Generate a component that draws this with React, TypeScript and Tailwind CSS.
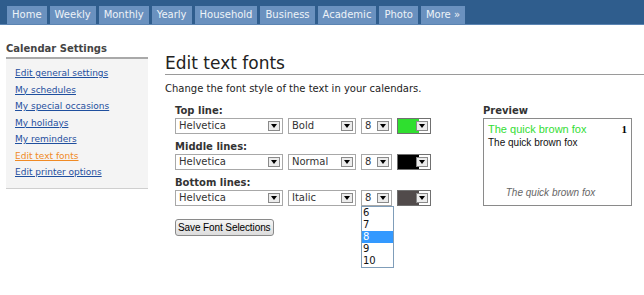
import React from 'react';

const tabs = ['Home', 'Weekly', 'Monthly', 'Yearly', 'Household', 'Business', 'Academic', 'Photo', 'More »'];

const links = [
  'Edit general settings',
  'My schedules',
  'My special occasions',
  'My holidays',
  'My reminders',
  'Edit text fonts',
  'Edit printer options',
];

function Arrow() {
  return (
    <div className="absolute right-[2px] top-[2px] bottom-[2px] w-[12px] bg-[#ececec] border border-[#8a8a8a] flex items-center justify-center">
      <svg width="6" height="4" viewBox="0 0 6 4">
        <path d="M0 0h6L3 4z" fill="#000" />
      </svg>
    </div>
  );
}

function FakeSelect({ value, w }: { value: string; w: string }) {
  return (
    <div className={`relative h-[16px] ${w} bg-white border border-[#a8a8a8] pl-[3px] leading-[14px] text-[#333]`}>
      {value}
      <Arrow />
    </div>
  );
}

function ColorSelect({ color }: { color: string }) {
  return (
    <div className="relative h-[16px] w-[34px] bg-white border border-[#707070]">
      <div className="absolute left-0 top-0 bottom-0 w-[21px]" style={{ background: color }} />
      <Arrow />
    </div>
  );
}

function Row({ label, style, color, open }: { label: string; style: string; color: string; open?: boolean }) {
  return (
    <div className="mt-[6px] first:mt-0">
      <div className="font-bold text-[#333] leading-[14px]">{label}</div>
      <div className="flex gap-[5px]">
        <FakeSelect value="Helvetica" w="w-[108px]" />
        <FakeSelect value={style} w="w-[68px]" />
        <div className="relative">
          <FakeSelect value="8" w="w-[31px]" />
          {open && (
            <div className="absolute left-0 top-[16px] w-[33px] bg-white border border-[#7f9db9] text-[#111] z-10">
              {['6', '7', '8', '9', '10'].map((n) => (
                <div key={n} className={`h-[12px] leading-[12px] pl-[1px] ${n === '8' ? 'bg-[#3399ff] text-white' : ''}`}>
                  {n}
                </div>
              ))}
            </div>
          )}
        </div>
        <ColorSelect color={color} />
      </div>
    </div>
  );
}

export default function App() {
  return (
    <div className="w-[644px] h-[295px] bg-white font-['DejaVu_Sans',sans-serif] text-[10px] overflow-hidden">
      <div className="h-[25px] bg-[#2f5d8d] border-b border-[#5b84b2] flex items-end pl-[7px] gap-[3px]">
        {tabs.map((t) => (
          <div key={t} className="h-[18px] px-[5px] bg-[#6a91bf] text-[#eef3f8] leading-[18px]">
            {t}
          </div>
        ))}
      </div>

      <div className="flex">
        <div className="w-[142px] ml-[6px] mt-[17px]">
          <div className="font-bold text-[#444] leading-[14px] pb-[1px] border-b-2 border-[#a9a9a9]">Calendar Settings</div>
          <div className="bg-[#f4f4f4] border-b border-[#cfcfcf] pt-[6px] pb-[7px] pl-[9px] text-[9px]">
            {links.map((l) => (
              <div key={l} className="h-[16.5px] leading-[16.5px]">
                <a className={`underline ${l === 'Edit text fonts' ? 'text-[#f08a24]' : 'text-[#1f4f9e]'}`}>{l}</a>
              </div>
            ))}
          </div>
        </div>

        <div className="flex-1 ml-[17px]">
          <h1 className="mt-[27px] text-[17px] leading-[22px] text-[#222] border-b border-[#9a9a9a]">Edit text fonts</h1>
          <p className="mt-[7px] leading-[14px] text-[#222]">Change the font style of the text in your calendars.</p>

          <div className="flex mt-[8px] pl-[10px]">
            <div className="w-[308px]">
              <Row label="Top line:" style="Bold" color="#2fdf2f" />
              <Row label="Middle lines:" style="Normal" color="#000000" />
              <Row label="Bottom lines:" style="Italic" color="#514b4b" open />
              <button className="mt-[13px] h-[17px] px-[2px] border border-[#8a8a8a] rounded-[3px] bg-gradient-to-b from-[#f6f6f6] to-[#dcdcdc] font-['Liberation_Sans',sans-serif] text-[10px] tracking-[-0.1px] leading-[15px] text-black">
                Save Font Selections
              </button>
            </div>
            <div className="w-[149px]">
              <div className="font-bold text-[#333] leading-[14px]">Preview</div>
              <div className="relative h-[88px] border border-[#8a8a8a] px-[4px] pt-[4px] font-['Liberation_Sans',sans-serif] text-[10px]">
                <div className="flex justify-between leading-[13px]">
                  <span className="text-[11px] text-[#33dd33]">The quick brown fox</span>
                  <span className="font-bold text-black font-['Liberation_Serif',serif] text-[11px]">1</span>
                </div>
                <div className="leading-[13px] text-[#111]">The quick brown fox</div>
                <div className="absolute bottom-[5px] left-0 right-[14px] text-center italic text-[#666]">The quick brown fox</div>
              </div>
            </div>
          </div>
        </div>
      </div>
    </div>
  );
}
